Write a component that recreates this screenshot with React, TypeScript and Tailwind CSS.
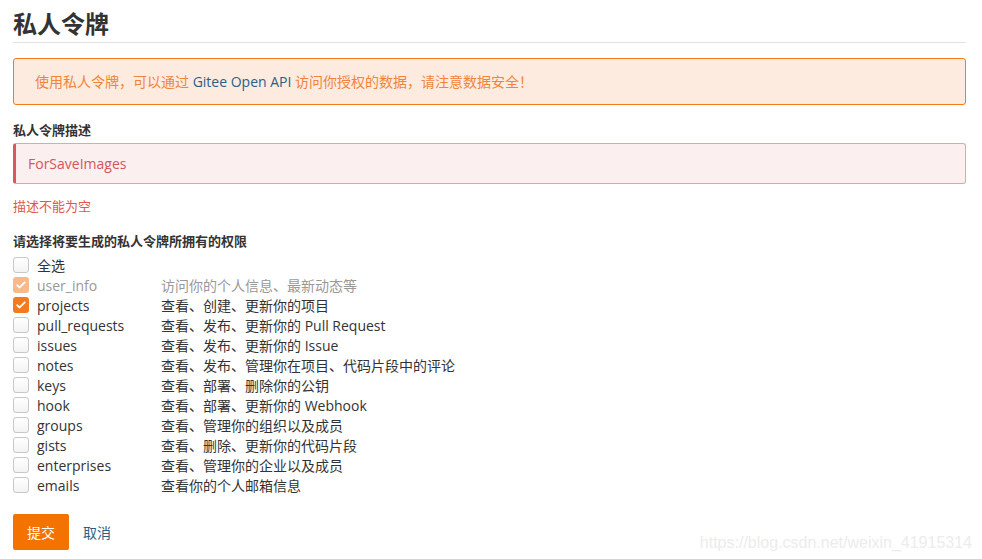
import React from "react";

// Gitee 私人令牌 creation form
const SCOPES: { name: string; desc: string; checked?: boolean; disabled?: boolean }[] = [
  { name: "user_info", desc: "访问你的个人信息、最新动态等", checked: true, disabled: true },
  { name: "projects", desc: "查看、创建、更新你的项目", checked: true },
  { name: "pull_requests", desc: "查看、发布、更新你的 Pull Request" },
  { name: "issues", desc: "查看、发布、更新你的 Issue" },
  { name: "notes", desc: "查看、发布、管理你在项目、代码片段中的评论" },
  { name: "keys", desc: "查看、部署、删除你的公钥" },
  { name: "hook", desc: "查看、部署、更新你的 Webhook" },
  { name: "groups", desc: "查看、管理你的组织以及成员" },
  { name: "gists", desc: "查看、删除、更新你的代码片段" },
  { name: "enterprises", desc: "查看、管理你的企业以及成员" },
  { name: "emails", desc: "查看你的个人邮箱信息" },
];

function Box({ checked, disabled }: { checked?: boolean; disabled?: boolean }) {
  if (checked) {
    return (
      <span
        className={`flex h-4 w-4 items-center justify-center rounded-[3px] ${
          disabled ? "bg-[#f8b98a]" : "bg-[#f37b1d]"
        }`}
      >
        <svg viewBox="0 0 16 16" className="h-3 w-3" fill="none">
          <path d="M3 8.3l3.2 3L13 4.6" stroke="white" strokeWidth="2.4" strokeLinecap="round" strokeLinejoin="round" />
        </svg>
      </span>
    );
  }
  return (
    <span className="h-4 w-4 rounded-[3px] border border-[#c8c8c8] bg-gradient-to-b from-white to-[#f3f3f3]" />
  );
}

export default function App() {
  return (
    <div
      className="h-[559px] w-[982px] bg-white pl-[13px] pr-[16px] text-[14px] text-[#333]"
      style={{ fontFamily: '"Open Sans", "Noto Sans CJK SC", sans-serif' }}
    >
      <h1 className="pt-[9px] pb-[3px] text-[24px] font-bold leading-[30px] text-[#333]">私人令牌</h1>
      <div className="border-b border-[#e3e3e3]" />

      <div className="mt-[15px] flex h-[47px] items-center rounded-[3px] border border-[#f37b1d] bg-[#fdebdf] px-[21px] text-[14px] text-[#f0843a]">
        <span>
          使用私人令牌，可以通过 <span className="text-[#2b5f86]">Gitee Open API</span> 访问你授权的数据，请注意数据安全！
        </span>
      </div>

      <p className="mt-[15px] text-[13px] font-bold leading-[20px] text-[#333]">私人令牌描述</p>
      <div className="mt-[3px] flex h-[41px] items-center rounded-[3px] border border-l-[3px] border-[#d9aaaa] border-l-[#d9585c] bg-[#fcefef] pl-[12px] text-[14px] text-[#d2565c]">
        ForSaveImages
      </div>
      <p className="mt-[13px] text-[13px] leading-[18px] text-[#e0574a]">描述不能为空</p>

      <p className="mt-[16px] text-[13px] font-bold leading-[20px] text-[#333]">请选择将要生成的私人令牌所拥有的权限</p>
      <div className="mt-[4px] flex flex-col">
        <label className="flex h-[20px] items-center">
          <Box />
          <span className="ml-[8px]">全选</span>
        </label>
        {SCOPES.map((s) => (
          <label key={s.name} className={`flex h-[20px] items-center ${s.disabled ? "text-[#999]" : ""}`}>
            <Box checked={s.checked} disabled={s.disabled} />
            <span className="ml-[8px] w-[124px]">{s.name}</span>
            <span>{s.desc}</span>
          </label>
        ))}
      </div>

      <div className="mt-[14px] flex items-center">
        <button className="h-[36px] w-[56px] rounded-[2px] bg-[#f37200] text-[14px] text-white">提交</button>
        <span className="ml-[14px] text-[#2b5f86]">取消</span>
        <span
          className="ml-auto mt-[22px] mr-[-6px] text-[16px] text-[#ececec]"
          style={{ fontFamily: '"Liberation Sans", Arial, sans-serif' }}
        >
          https://blog.csdn.net/weixin_41915314
        </span>
      </div>
    </div>
  );
}
